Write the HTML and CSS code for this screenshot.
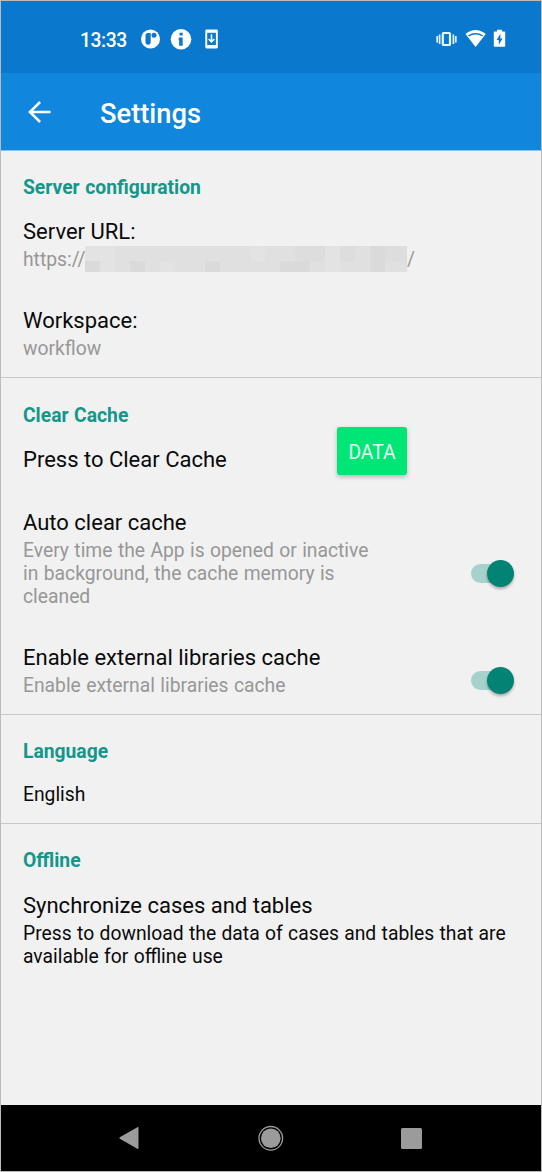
FILE: index.html
```html
<!DOCTYPE html>
<html lang="en">
<head>
<meta charset="utf-8">
<title>Settings</title>
<link rel="stylesheet" href="styles.css">
</head>
<body>
<div class="phone">
  <header class="status">
    <span class="clock">13:33</span>
    <svg class="notif" width="144" height="24" viewBox="0 0 144 24">
      <circle cx="14.500" cy="12" r="9.500" fill="#fff"/>
      <path d="M9.500 8.500q0-2.500 2.500-2.500h2.700v9.500q0 2.200-2.600 2.200t-2.600-2.200z" fill="#0a78cc"/>
      <circle cx="18" cy="8.300" r="2.500" fill="#0a78cc"/>
      <circle cx="45" cy="12.200" r="10.300" fill="#fff"/>
      <path d="M43.500 5.700h3.200v2.800h-3.200zM42.700 10.500h4v8.300h-3.600v-5.700h-.4z" fill="#0a78cc"/>
      <rect x="69.300" y="2.600" width="12.500" height="18.800" rx="1.300" fill="#fff"/>
      <path d="M71.200 5.800h8.700v12.200h-8.700z" fill="#0a78cc"/>
      <path d="M75.500 7.300v7M72.700 12.100l2.800 2.900 2.800-2.900" fill="none" stroke="#fff" stroke-width="1.500"/>
    </svg>
    <svg class="system" width="72" height="24" viewBox="0 0 72 24">
      <rect x="7.800" y="6" width="7.200" height="12" rx=".8" fill="none" stroke="#e6f9ff" stroke-width="2.200"/>
      <path d="M4.600 7.500v9.500M2.200 9v6.500M18.400 7.500v9.500M20.800 9v6.500" stroke="#dff5ff" stroke-width="1.700"/>
      <path d="M30.500 7q10-8 20.200 0L40.600 20z" fill="#fff"/>
      <path d="M33.400 9q7.200-4.600 14.400 0" fill="none" stroke="#0a78cc" stroke-width="1.400"/>
      <path d="M62 2.800h5v1.600h2.400q.8 0 .8.800v13.800q0 .8-.8.800h-9.800q-.8 0-.8-.8V5.200q0-.8.800-.8H62z" fill="#fff"/>
      <path d="M65.400 6.800v4.800h2.200l-3.800 6.200v-4.900h-2.200z" fill="#0a78cc"/>
    </svg>
  </header>
  <div class="appbar">
    <svg class="back" width="24" height="24" viewBox="0 0 24 24"><path d="M23.500 12H3.200M13.100 2L2.900 12l10.200 10" fill="none" stroke="#fff" stroke-width="2.500"/></svg>
    <h1 class="heading">Settings</h1>
  </div>
  <main class="settings">
    <section class="group server">
      <h2 class="label">Server configuration</h2>
      <div class="item">
        <div class="title">Server URL:</div>
        <div class="summary url"><span class="scheme">https://</span><svg class="redacted" width="322" height="26" viewBox="0 0 322 26" shape-rendering="crispEdges">
          <rect width="322" height="26" fill="#e0e0e0"/>
          <path d="M0 15h15v11H0zM45 15h15v11H45zM120 15h15v11h-15zM195 15h30v11h-30zM285 15h15v11h-15zM285 0h15v15h-15z" fill="#dadada"/>
          <path d="M210 0h30v15h-30zM255 0h15v15h-15zM300 0h22v15h-22z" fill="#dddddd"/>
          <path d="M15 15h15v11H15zM75 15h15v11H75zM165 0h15v15h-15zM240 0h15v26h-15zM0 0h30v15H0z" fill="#e3e3e3"/>
        </svg><span>/</span></div>
      </div>
      <div class="item">
        <div class="title">Workspace:</div>
        <div class="summary">workflow</div>
      </div>
    </section>
    <section class="group cache">
      <h2 class="label">Clear Cache</h2>
      <div class="item clear">
        <div class="title">Press to Clear Cache</div>
        <button class="data">DATA</button>
      </div>
      <div class="item row">
        <div class="copy">
          <div class="title">Auto clear cache</div>
          <div class="summary">Every time the App is opened or inactive in background, the cache memory is cleaned</div>
        </div>
        <span class="switch"><span class="thumb"></span></span>
      </div>
      <div class="item row libraries">
        <div class="copy">
          <div class="title">Enable external libraries cache</div>
          <div class="summary">Enable external libraries cache</div>
        </div>
        <span class="switch"><span class="thumb"></span></span>
      </div>
    </section>
    <section class="group language">
      <h2 class="label">Language</h2>
      <div class="summary dark">English</div>
    </section>
    <section class="group offline">
      <h2 class="label">Offline</h2>
      <div class="item">
        <div class="title">Synchronize cases and tables</div>
        <div class="summary dark">Press to download the data of cases and tables that are available for offline use</div>
      </div>
    </section>
  </main>
  <nav class="navbar">
    <svg width="24" height="28" viewBox="0 0 24 28"><path d="M21.500 3.800v20.400q0 1.200-1.100.6L2.800 14.700q-1-.7 0-1.400L20.400 3.200q1.100-.6 1.100.6z" fill="#9b9b9b"/></svg>
    <svg width="28" height="28" viewBox="0 0 28 28"><circle cx="14.800" cy="14.300" r="11.800" fill="none" stroke="#9b9b9b" stroke-width="1.300"/><circle cx="14.800" cy="14.300" r="9.800" fill="#9b9b9b"/></svg>
    <svg width="24" height="28" viewBox="0 0 24 28"><rect x="2" y="4" width="21" height="21" rx="1.500" fill="#9b9b9b"/></svg>
  </nav>
</div>
</body>
</html>
```
FILE: styles.css
```css
* { box-sizing: border-box; }
body { margin: 0; font-family: Roboto, sans-serif; }
.phone {
  width: 542px;
  height: 1172px;
  border: 1px solid #bbb;
  background: #f1f1f1;
  display: flex;
  flex-direction: column;
}
.status {
  height: 72px;
  flex: none;
  background: #0a78cc;
  color: #fff;
  display: flex;
  align-items: flex-start;
  padding: 26px 34px 0 79px;
}
.clock { font-size: 19.3px; font-weight: 500; line-height: 26px; width: 56px; padding-top: 1px; letter-spacing: -.45px; }
.system { margin-left: auto; }
.appbar {
  height: 78px;
  flex: none;
  background: #1186dd;
  color: #fff;
  display: flex;
  align-items: center;
  padding-left: 26px;
  border-bottom: 1px solid #8cc0e8;
}
.heading { margin: 4px 0 0 49px; font-size: 27.3px; font-weight: 500; line-height: 34px; }
.settings { flex: 1; }
.group { padding-left: 22px; border-bottom: 1px solid #c8c8c8; }
.label {
  margin: 0;
  color: #14978a;
  font-size: 19.3px;
  font-weight: 700;
  line-height: 24px;
  word-spacing: .8px;
}
.title { color: #0a0a0a; font-size: 22px; line-height: 28px; }
.summary { margin-top: 2px; color: #979797; font-size: 19.3px; line-height: 23px; word-spacing: .6px; }
.dark { color: #0a0a0a; }
.server { height: 227px; padding-top: 25px; }
.server .item { margin-top: 18px; height: 69px; }
.server .item + .item { margin-top: 20px; }
.url { display: flex; align-items: center; height: 26px; margin-top: 0; }
.scheme { width: 62px; }
.cache { height: 337px; padding-top: 26px; }
.clear { display: flex; height: 69px; margin-top: -1px; }
.clear .title { width: 314px; margin-top: 19px; }
.data {
  width: 70px;
  height: 48px;
  border: 0;
  border-radius: 3px;
  padding: 3px 0 0;
  background: #00e676;
  color: #e9fff3;
  font: 19.3px Roboto, sans-serif;
  box-shadow: 0 2px 4px rgba(0, 0, 0, .25);
}
.row { display: flex; margin-top: 13px; }
.copy { width: 360px; }
.switch {
  width: 42px;
  height: 19px;
  border-radius: 10px;
  background: #a6d2cb;
  margin: 55px 0 0 88px;
}
.libraries { margin-top: 36px; }
.libraries .switch { margin-top: 27px; }
.thumb {
  display: block;
  width: 27px;
  height: 27px;
  border-radius: 50%;
  background: #028373;
  margin: -4px 0 0 16px;
  box-shadow: 0 2px 3px rgba(0, 0, 0, .3);
}
.language { height: 109px; padding-top: 25px; }
.language .summary { margin-top: 19px; }
.offline { border: 0; padding-top: 25px; }
.offline .item { margin-top: 19px; }
.offline .summary { width: 500px; }
.navbar {
  height: 66px;
  flex: none;
  background: #000;
  display: flex;
  align-items: center;
  justify-content: space-between;
  padding: 0 118px 0 116px;
}
```
